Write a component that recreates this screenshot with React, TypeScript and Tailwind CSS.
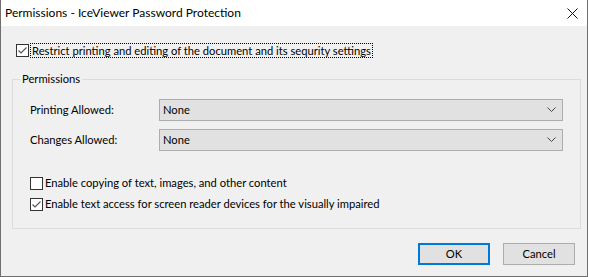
import React from 'react';

const font = { fontFamily: 'Lato, "Liberation Sans", sans-serif' };

function Check({ checked }: { checked?: boolean }) {
  return (
    <span className="flex h-[13px] w-[13px] shrink-0 items-center justify-center border border-[#333333] bg-white">
      {checked && (
        <svg width="11" height="11" viewBox="0 0 11 11" fill="none">
          <path d="M1.5 5.5 L4 8 L9.5 2.5" stroke="#555555" strokeWidth="1.2" />
        </svg>
      )}
    </span>
  );
}

function Combo({ value }: { value: string }) {
  return (
    <div className="flex h-[22px] w-[404px] items-center justify-between border border-[#adadad] bg-[#e1e1e1] pl-[3px] pr-[6px]">
      <span>{value}</span>
      <svg width="9" height="6" viewBox="0 0 9 6" fill="none">
        <path d="M0.5 0.5 L4.5 4.5 L8.5 0.5" stroke="#444444" strokeWidth="1" />
      </svg>
    </div>
  );
}

export default function App() {
  return (
    <div
      className="flex h-[277px] w-[588px] flex-col border-x border-b border-[#6f6f6f] bg-[#f0f0f0] text-[11.2px] leading-[16px] text-black"
      style={font}
    >
      {/* title bar */}
      <div className="flex h-[26px] shrink-0 items-center justify-between bg-white pl-[4px] pr-[9px]">
        <span className="text-[12px]">Permissions - IceViewer Password Protection</span>
        <svg width="11" height="11" viewBox="0 0 11 11" fill="none">
          <path d="M0.5 0.5 L10.5 10.5 M10.5 0.5 L0.5 10.5" stroke="#111111" strokeWidth="1" />
        </svg>
      </div>

      <div className="flex flex-1 flex-col px-[11px]">
        <label className="mt-[17px] ml-[4px] flex items-center">
          <Check checked />
          <span className="ml-[1px] border border-dotted border-black px-[1px] leading-[13px]">
            Restrict printing and editing of the document and its sequrity settings
          </span>
        </label>

        <fieldset className="mt-[14px] h-[157px] w-[567px] border border-[#dcdcdc] px-[17px] pb-0">
          <legend className="ml-[-10px] px-[2px] leading-[14px]">Permissions</legend>

          <div className="mt-[13px] flex items-center">
            <span className="w-[129px]">Printing Allowed:</span>
            <Combo value="None" />
          </div>
          <div className="mt-[8px] flex items-center">
            <span className="w-[129px]">Changes Allowed:</span>
            <Combo value="None" />
          </div>

          <div className="mt-[24px] flex flex-col gap-[5px]">
            <label className="flex items-center gap-[2px]">
              <Check />
              <span>Enable copying of text, images, and other content</span>
            </label>
            <label className="flex items-center gap-[2px]">
              <Check checked />
              <span>Enable text access for screen reader devices for the visually impaired</span>
            </label>
          </div>
        </fieldset>

        <div className="mt-[14px] flex justify-end gap-[13px] pr-[1px]">
          <button className="h-[22px] w-[72px] border-2 border-[#0078d7] bg-[#e1e1e1]">OK</button>
          <button className="h-[22px] w-[72px] border border-[#adadad] bg-[#e1e1e1]">Cancel</button>
        </div>
      </div>
    </div>
  );
}
